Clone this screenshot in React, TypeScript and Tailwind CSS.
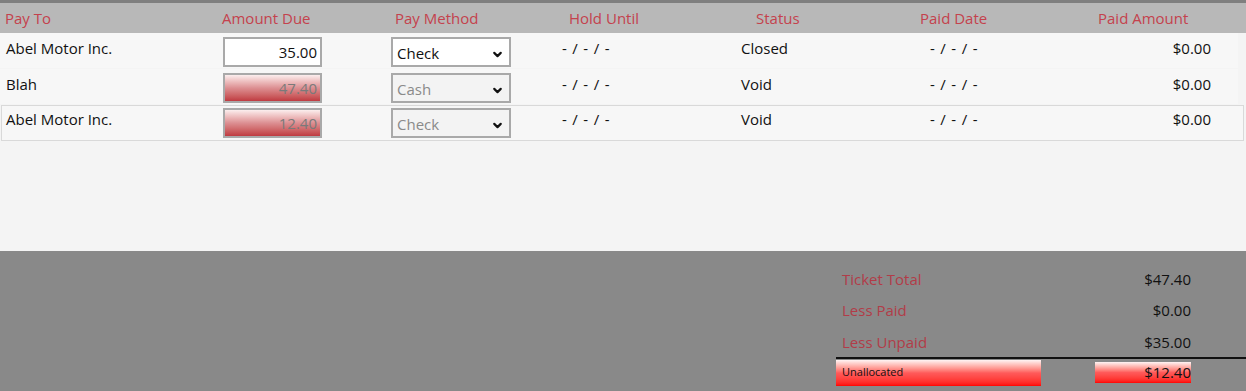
import { ChevronDown } from "lucide-react";

type Payment = {
  payTo: string;
  amount: string;
  method: string;
  status: string;
  paid: string;
  locked: boolean;
  outlined?: boolean;
};

const PAYMENTS: Payment[] = [
  { payTo: "Abel Motor Inc.", amount: "35.00", method: "Check", status: "Closed", paid: "$0.00", locked: false },
  { payTo: "Blah", amount: "47.40", method: "Cash", status: "Void", paid: "$0.00", locked: true },
  { payTo: "Abel Motor Inc.", amount: "12.40", method: "Check", status: "Void", paid: "$0.00", locked: true, outlined: true },
];

const SUMMARY = [
  { label: "Ticket Total", value: "$47.40" },
  { label: "Less Paid", value: "$0.00" },
  { label: "Less Unpaid", value: "$35.00" },
];

function AmountBox({ value, locked }: { value: string; locked: boolean }) {
  return (
    <div
      className={
        "w-[99px] h-[30px] border-2 border-[#a9a9a9] flex items-center justify-end pr-[3px] text-[15px] " +
        (locked
          ? "bg-gradient-to-b from-[#fbeeee] via-[#dc8f92] to-[#bf3a41] text-[#7a7a7a]"
          : "bg-white text-[#111]")
      }
    >
      {value}
    </div>
  );
}

function MethodBox({ value, locked }: { value: string; locked: boolean }) {
  return (
    <div
      className={
        "w-[120px] h-[30px] border-2 border-[#a9a9a9] flex items-center justify-between pl-[4px] pr-[5px] pt-[2px] text-[15px] " +
        (locked ? "bg-[#f3f3f3] text-[#8a8a8a]" : "bg-white text-[#111]")
      }
    >
      <span>{value}</span>
      <ChevronDown size={13} strokeWidth={4} className="text-[#111] mt-[2px]" />
    </div>
  );
}

export default function App() {
  return (
    <div
      className="w-[1246px] h-[391px] flex flex-col overflow-hidden bg-[#f4f4f4]"
      style={{ fontFamily: '"Open Sans", "Noto Sans", sans-serif' }}
    >
      {/* column headers */}
      <div className="h-[33px] shrink-0 border-t-[3px] border-[#7f7f7f] bg-[#b8b8b8] flex items-center text-[15px] text-[#c4424d]">
        <div className="w-[222px] pl-[5px]">Pay To</div>
        <div className="w-[173px]">Amount Due</div>
        <div className="w-[174px]">Pay Method</div>
        <div className="w-[187px]">Hold Until</div>
        <div className="w-[164px]">Status</div>
        <div className="w-[178px]">Paid Date</div>
        <div>Paid Amount</div>
      </div>

      {/* payment rows */}
      <div className="h-[218px] shrink-0 flex flex-col gap-px text-[15px] text-[#111]">
        {PAYMENTS.map((p, i) => {
          const textPad = p.outlined ? "pt-[2px]" : "pt-[4px]";
          return (
            <div
              key={i}
              className={
                "flex items-start bg-[#f7f7f7] " +
                (p.outlined ? "w-[1243px] ml-px h-[36px] border border-[#d9d9d9]" : "w-[1238px] h-[35px]")
              }
            >
              <div className={textPad + " " + (p.outlined ? "w-[221px] pl-[4px]" : "w-[223px] pl-[6px]")}>{p.payTo}</div>
              <div className={"w-[168px] " + (p.outlined ? "pt-[2px]" : "pt-[4px]")}>
                <AmountBox value={p.amount} locked={p.locked} />
              </div>
              <div className={"w-[171px] " + (p.outlined ? "pt-[2px]" : "pt-[4px]")}>
                <MethodBox value={p.method} locked={p.locked} />
              </div>
              <div className={"w-[179px] tracking-[0.8px] " + textPad}>- / - / -</div>
              <div className={"w-[189px] " + textPad}>{p.status}</div>
              <div className={"w-[170px] tracking-[0.8px] " + textPad}>- / - / -</div>
              <div className={"w-[111px] text-right " + textPad}>{p.paid}</div>
            </div>
          );
        })}
      </div>

      {/* totals */}
      <div className="flex-1 bg-[#898989] flex justify-end pt-[12px]">
        <div className="w-[410px] flex flex-col">
          {SUMMARY.map((s) => (
            <div key={s.label} className="h-[31.5px] flex items-center justify-between pl-[6px] pr-[55px] text-[15px]">
              <span className="text-[#b23c48]">{s.label}</span>
              <span className="text-[#111]">{s.value}</span>
            </div>
          ))}
          <div className="mt-[-1px] h-[2px] bg-[#111]" />
          <div className="flex items-start pt-px">
            <div className="w-[205px] h-[26px] bg-gradient-to-b from-[#fff4f4] via-[#ff5a5a] to-[#ff0000] flex items-center pl-[6px] text-[11px] text-[#111]">
              Unallocated
            </div>
            <div className="ml-[54px] mt-[2px] w-[96px] h-[21px] bg-gradient-to-b from-[#fff4f4] via-[#ff5a5a] to-[#ff0000] flex items-center justify-end text-[15px] text-[#111]">
              $12.40
            </div>
          </div>
        </div>
      </div>
    </div>
  );
}
